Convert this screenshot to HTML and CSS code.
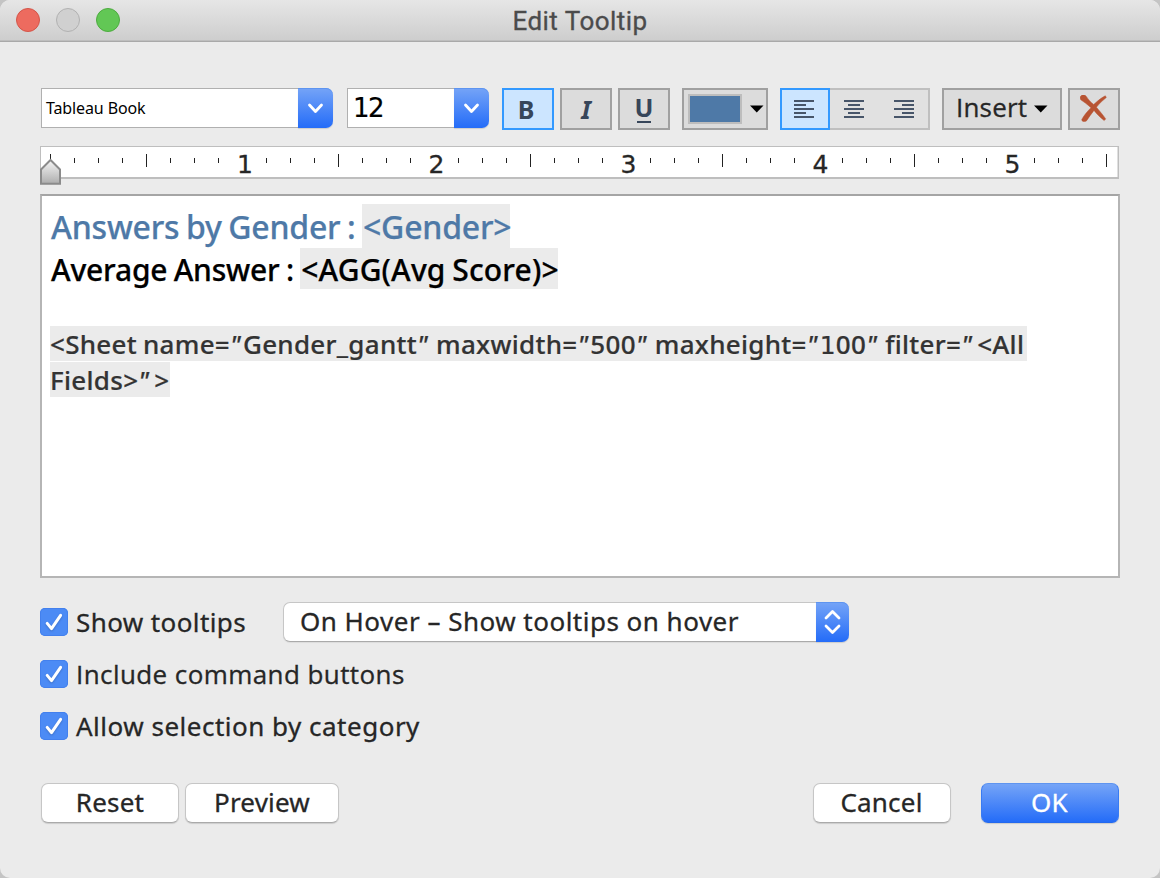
FILE: index.html
```html
<!DOCTYPE html>
<html lang="en">
<head>
<meta charset="utf-8">
<title>Edit Tooltip</title>
<link rel="stylesheet" href="styles.css">
</head>
<body>
<div class="window">
  <header class="titlebar">
    <div class="lights"><span class="light close"></span><span class="light minimize"></span><span class="light maximize"></span></div>
    <h1 class="title">Edit Tooltip</h1>
  </header>
  <main class="content">
    <div class="toolbar">
      <div class="combo font-combo">
        <span class="combo-value font-name">Tableau Book</span>
        <span class="combo-arrow"><svg width="35" height="40" viewBox="0 0 35 40"><path d="M11.5 17l6 6.5 6-6.5"/></svg></span>
      </div>
      <div class="combo size-combo">
        <span class="combo-value size-value">12</span>
        <span class="combo-arrow"><svg width="35" height="40" viewBox="0 0 35 40"><path d="M11.5 17l6 6.5 6-6.5"/></svg></span>
      </div>
      <div class="styles">
        <button class="tool bold active">B</button>
        <button class="tool italic">I</button>
        <button class="tool"><span class="underlined">U</span></button>
      </div>
      <button class="tool color">
        <span class="swatch"></span>
        <svg width="14" height="8" viewBox="0 0 14 8"><path d="M0 .5h13.500L6.750 7.500z"/></svg>
      </button>
      <div class="align">
        <button class="align-item selected"><svg width="20" height="18" viewBox="0 0 20 18"><path d="M0 1h20M0 5h12M0 9h20M0 13h12M0 17h20"/></svg></button>
        <button class="align-item"><svg width="20" height="18" viewBox="0 0 20 18"><path d="M0 1h20M4 5h12M0 9h20M4 13h12M0 17h20"/></svg></button>
        <button class="align-item"><svg width="20" height="18" viewBox="0 0 20 18"><path d="M0 1h20M8 5h12M0 9h20M8 13h12M0 17h20"/></svg></button>
      </div>
      <button class="tool insert"><span>Insert</span><svg width="14" height="8" viewBox="0 0 14 8"><path d="M0 .5h13.500L6.750 7.500z"/></svg></button>
      <button class="tool clear"><svg width="27" height="27" viewBox="0 0 27 27"><path d="M.5 1.400C1.800-.4 5-.3 6.300 1.400c2 3 4.200 5.700 7.400 8.100C17.500 6 21 3 25.300.8l1 1.700c-3.700 2.800-6.900 6-9.900 9.700 3 3.600 6.200 7.200 9.300 11.700l-1.500 1.600c-4-3.200-7.300-6.500-10.200-10.100-2.700 3.300-4.900 6.600-7.200 10.100-1.500 1.900-5.300 1.300-5-1.100 2.400-4.300 5.600-8 9.200-11.700C7.500 9.500 4 7 .8 4.800.1 3.600-.2 2.500.5 1.400z"/></svg></button>
    </div>

    <svg class="ruler" width="1080" height="40" viewBox="40 146 1080 40">
      <defs>
        <linearGradient id="marker" x1="0" y1="0" x2="0" y2="1"><stop offset="0" stop-color="#f6f6f6"/><stop offset="1" stop-color="#adadad"/></linearGradient>
        <pattern id="minor" x="50" y="158" width="24" height="5" patternUnits="userSpaceOnUse"><path class="ink" d="M0 0h1v5H0z"/></pattern>
        <pattern id="major" x="146" y="154" width="192" height="13" patternUnits="userSpaceOnUse"><path class="ink" d="M0 0h1v13H0z"/></pattern>
      </defs>
      <path class="ruler-line" d="M40 146h1079v33H40z"/>
      <path fill="#fff" d="M41 147h1076.500v30H41z"/>
      <path fill="url(#minor)" d="M50 158h1056v5H50z"/>
      <path fill="#fff" d="M232 154h24v14h-24zM424 154h24v14h-24zM616 154h24v14h-24zM808 154h24v14h-24zM1000 154h24v14h-24z"/>
      <path fill="url(#major)" d="M146 154h961v13H146z"/>
      <path class="ink" d="M50 154h1v6h-1z"/>
      <g class="ruler-text"><text x="245" y="172.500">1</text><text x="436.500" y="172.500">2</text><text x="628.500" y="172.500">3</text><text x="820.500" y="172.500">4</text><text x="1012.500" y="172.500">5</text></g>
      <path class="marker" d="M41 183.800V169.500L50.500 160l9.500 9.500v14.300z"/>
    </svg>

    <section class="editor">
      <div class="line heading">Answers by Gender : <span class="field gender">&lt;Gender&gt;</span></div>
      <div class="line average">Average Answer : <span class="field score">&lt;AGG(Avg Score)&gt;</span></div>
      <div class="sheet">
        <div class="field sheet-first">&lt;Sheet name=<i>"</i>Gender_gantt<i>"</i> maxwidth=<i>"</i>500<i>"</i> maxheight=<i>"</i><b>1</b>00<i>"</i> filter=<i>"</i>&lt;All</div>
        <div class="field sheet-last">Fields&gt;<i>"</i>&gt;</div>
      </div>
    </section>

    <section class="options">
      <div class="option">
        <span class="checkbox"><svg width="28" height="28" viewBox="0 0 28 28"><path d="M7.200 15.400l4.300 5.200L20.600 7.300"/></svg></span>
        <span class="label show">Show tooltips</span>
        <div class="select"><span class="select-value">On Hover – Show tooltips on hover</span>
          <span class="select-arrow"><svg width="33" height="40" viewBox="0 0 33 40"><path d="M10 16l6.500-6.500L23 16M10 24l6.500 6.500L23 24"/></svg></span></div>
      </div>
      <div class="option">
        <span class="checkbox"><svg width="28" height="28" viewBox="0 0 28 28"><path d="M7.200 15.400l4.300 5.200L20.600 7.300"/></svg></span>
        <span class="label include">Include command buttons</span>
      </div>
      <div class="option">
        <span class="checkbox"><svg width="28" height="28" viewBox="0 0 28 28"><path d="M7.200 15.400l4.300 5.200L20.600 7.300"/></svg></span>
        <span class="label allow">Allow selection by category</span>
      </div>
    </section>

    <footer class="actions">
      <button class="push reset">Reset</button>
      <button class="push preview">Preview</button>
      <button class="push cancel">Cancel</button>
      <button class="push primary">OK</button>
    </footer>
  </main>
</div>
</body>
</html>
```
FILE: styles.css
```css
* { box-sizing: border-box; }
body { margin: 0; background: #c4c4c4; font-family: "Noto Sans", sans-serif; font-size: 26px; color: #262626; }
button { appearance: none; margin: 0; padding: 0; border: 0; font: inherit; color: inherit; background: none; }
svg { display: block; flex: none; }

.window { width: 1160px; height: 878px; background: #ebebeb; border-radius: 10px; overflow: hidden; }
.titlebar { height: 42px; display: grid; grid-template-columns: 200px 1fr 200px; background: linear-gradient(#e6e6e6, #cdcdcd); border-bottom: 1px solid #a9a9a9; box-shadow: inset 0 -1px #bebebe; }
.lights { display: flex; gap: 16px; padding: 8px 0 0 16px; }
.light { width: 24px; height: 24px; border-radius: 50%; border: 1px solid; }
.close { background: #ed6b5f; border-color: #d35549; }
.minimize { background: #d0d0d0; border-color: #b1b1b1; }
.maximize { background: #62c755; border-color: #4dab3f; }
.title { margin: 0; font: 400 26px/42px Roboto, sans-serif; letter-spacing: .45px; text-align: center; color: #4b4b4b; -webkit-text-stroke: .3px; }

.content { padding: 46px 40px 0; }
.toolbar { display: flex; height: 42px; padding-left: 1px; }

.combo { display: flex; height: 40px; }
.font-combo { width: 292px; margin-right: 14px; }
.size-combo { width: 142px; margin-right: 13px; }
.combo-value { flex: 1; background: #fff; border: 1px solid #b0b0b0; border-right: 0; color: #000; white-space: nowrap; }
.font-name { padding-left: 4px; font-size: 16px; line-height: 39px; letter-spacing: -.12px; }
.size-value { padding-left: 5px; font: 26px/39px "DejaVu Sans", sans-serif; letter-spacing: -1.5px; -webkit-text-stroke: .2px; }
.combo-arrow, .select-arrow { background: linear-gradient(#75a4f7, #246cf8); border-radius: 0 7px 7px 0; box-shadow: inset 0 1px #5e94f0, 0 1px 1px #0002; }
.combo-arrow path, .select-arrow path { fill: none; stroke: #fff; stroke-width: 2.8; stroke-linecap: round; stroke-linejoin: round; }

.styles { display: flex; gap: 6px; margin-right: 12px; }
.tool { width: 52px; height: 42px; display: flex; align-items: center; justify-content: center; background: #dcdcdc; border: 2px solid #a0a0a0; color: #37465a; font-weight: 700; font-size: 25px; line-height: 36px; }
.active { background: #cce5ff; border-color: #3399ff; }
.bold { padding: 0 4px 1px 0; }
.italic { font-style: italic; padding-bottom: 1px; }
.underlined { height: 34px; line-height: 30px; background: linear-gradient(#37465a, #37465a) center bottom 3px / 14px 2px no-repeat; }
.color { width: 86px; justify-content: flex-start; gap: 8px; padding-left: 4px; margin-right: 12px; }
.swatch { width: 54px; height: 30px; background: #4e79a7; border: 2px solid #bdbdbd; }
.align { width: 150px; display: flex; margin-right: 12px; background: #e1e1e1; box-shadow: inset 0 0 0 2px #bfbfbf; }
.align-item { width: 50px; display: flex; align-items: center; justify-content: center; }
.align-item path { stroke: #475569; stroke-width: 2; }
.selected { background: #cce5ff; box-shadow: inset 0 0 0 2px #3399ff; padding-right: 3px; }
.align-item:not(.selected) { padding-right: 2px; }
.insert { width: 120px; gap: 7px; justify-content: flex-start; padding: 0 0 0 12px; margin-right: 6px; font: 400 26px/34px "Open Sans", sans-serif; letter-spacing: .2px; color: #262626; -webkit-text-stroke: .3px; }
.insert span { padding-bottom: 4px; }
.clear { padding: 0 1px 1px 0; }
.clear path { fill: #b85433; stroke: #b85433; stroke-width: .5; }

.ruler { margin-top: 16px; }
.ruler-line { fill: #bebebe; }
.ink { fill: #222; }
.ruler-text { font: 25px "DejaVu Sans", sans-serif; fill: #262626; stroke: #262626; stroke-width: .3px; text-anchor: middle; }
.marker { fill: url(#marker); stroke: #8b8b8b; stroke-width: 2; }

.editor { height: 384px; margin-top: 8px; padding: 8px; background: #fff; border: 2px solid #b5b5b5; border-top-color: #a5a5a5; color: #333; font-weight: 500; white-space: nowrap; }
.line { display: flex; justify-content: flex-start; white-space: pre; padding-left: 1px; }
.field { display: block; background: #ebebeb; white-space: pre; }
.heading { height: 44px; font-size: 32px; line-height: 46px; letter-spacing: -.2px; word-spacing: -1.600px; color: #4e79a7; -webkit-text-stroke: .25px; }
.gender { width: 148px; padding-left: 1px; }
.average { height: 41px; font-size: 30px; line-height: 43px; letter-spacing: -.2px; word-spacing: -1.300px; color: #000; -webkit-text-stroke: .25px; }
.score { width: 258px; padding-left: 1px; letter-spacing: .15px; }
.sheet { margin-top: 37px; display: grid; gap: 1px; font-size: 26px; line-height: 37px; letter-spacing: .28px; word-spacing: -1px; -webkit-text-stroke: .2px; }
.sheet .field { height: 35px; }
.sheet-first { width: 977px; }
.sheet-last { width: 120px; }
.sheet i { font-style: italic; margin-right: 2px; }
.sheet i:last-of-type { margin-right: 5px; }
.sheet b { font: 400 25px/35px "DejaVu Sans", sans-serif; }

.options { margin-top: 24px; }
.option { display: flex; align-items: center; height: 40px; margin-bottom: 12px; line-height: 40px; white-space: nowrap; -webkit-text-stroke: .3px; }
.checkbox { width: 28px; height: 28px; margin-right: 8px; border-radius: 5px; background: #4c8bf5; box-shadow: inset 0 0 0 1px #4380ed; }
.checkbox path { fill: none; stroke: #fff; stroke-width: 3; stroke-linecap: round; stroke-linejoin: round; filter: drop-shadow(0 1px 1px #0003); }
.show { width: 207px; letter-spacing: .4px; }
.include { font-family: "Open Sans", sans-serif; letter-spacing: .42px; }
.allow { letter-spacing: .5px; }
.select { width: 566px; height: 40px; display: flex; border-radius: 7px; }
.select-value { flex: 1; padding-left: 16px; line-height: 36px; letter-spacing: .49px; background: #fff; border: 1px solid #c6c6c6; border-bottom-color: #aaa; border-right: 0; border-radius: 7px 0 0 7px; box-shadow: 0 1px 1px #0001; }

.actions { display: flex; margin-top: 37px; padding-left: 1px; }
.push { width: 138px; height: 40px; line-height: 36px; padding-bottom: 2px; background: #fff; border: 1px solid #c6c6c6; border-bottom-color: #aaa; border-radius: 7px; box-shadow: 0 1px 1px #0002; letter-spacing: .2px; -webkit-text-stroke: .3px; }
.preview { width: 154px; margin: 0 auto 0 6px; }
.cancel { margin-right: 30px; padding-right: 1px; }
.primary { color: #fff; background: linear-gradient(#75a4f7, #246cf8); border-color: #5e94f0 #397bf2 #2469ee; margin-right: 1px; padding-right: 1px; }
```
